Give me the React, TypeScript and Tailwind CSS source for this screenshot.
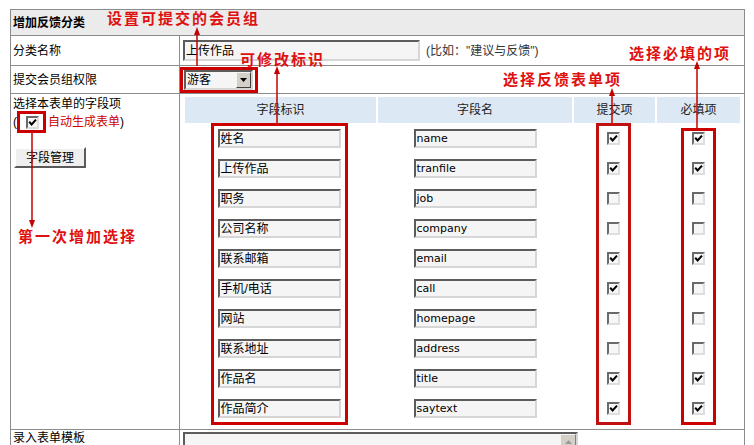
import React from "react";

const rows = [
  { label: "姓名", name: "name", submit: true, required: true },
  { label: "上传作品", name: "tranfile", submit: true, required: true },
  { label: "职务", name: "job", submit: false, required: false },
  { label: "公司名称", name: "company", submit: false, required: false },
  { label: "联系邮箱", name: "email", submit: true, required: true },
  { label: "手机/电话", name: "call", submit: true, required: false },
  { label: "网站", name: "homepage", submit: false, required: false },
  { label: "联系地址", name: "address", submit: false, required: false },
  { label: "作品名", name: "title", submit: true, required: true },
  { label: "作品简介", name: "saytext", submit: true, required: true },
];

function Check({ on }: { on: boolean }) {
  return (
    <span className="flex h-[13px] w-[13px] items-center justify-center border-2 border-t-[#6a6a6a] border-l-[#6a6a6a] border-b-[#dedede] border-r-[#dedede] bg-[#f7f7f7]">
      {on && (
        <svg width="9" height="9" viewBox="0 0 9 9">
          <path d="M1.2 3.8 L3.6 6.4 L8 1.6" stroke="#000" strokeWidth="2" fill="none" />
        </svg>
      )}
    </span>
  );
}

function Field({ value, wide }: { value: string; wide?: boolean }) {
  return (
    <div
      className={
        wide
          ? "flex h-[21px] w-[237px] items-center overflow-hidden whitespace-nowrap border-2 border-t-[#5c5c5c] border-l-[#5c5c5c] border-b-[#d6d6d6] border-r-[#d6d6d6] bg-[#f5f5f5] pl-[1px] pt-[1px] leading-none"
          : "flex h-[19px] w-[123px] items-center overflow-hidden whitespace-nowrap border-2 border-t-[#5c5c5c] border-l-[#5c5c5c] border-b-[#d6d6d6] border-r-[#d6d6d6] bg-[#f5f5f5] pl-[1px] pt-[1px] leading-none"
      }
    >
      {value}
    </div>
  );
}

function ArrowUp({ x, tip, end }: { x: number; tip: number; end: number }) {
  return (
    <g>
      <line x1={x} y1={tip + 4} x2={x} y2={end} stroke="#c40000" strokeWidth="1.5" />
      <polygon points={`${x},${tip} ${x - 3},${tip + 8} ${x + 3},${tip + 8}`} fill="#c40000" />
    </g>
  );
}

export default function App() {
  const note =
    "absolute whitespace-nowrap font-bold text-[15px] leading-[15px] tracking-[2px] text-[#e01010]";
  return (
    <div className="relative h-[445px] w-[754px] overflow-hidden bg-white font-['Liberation_Sans','Noto_Sans_CJK_SC',sans-serif] text-[12px] text-black">
      <div className="pl-[10px] pt-[9px]">
        <div className="w-[735px] border border-[#8c8c8c]">
          {/* header */}
          <div className="flex h-[26px] items-center border-b border-[#8c8c8c] bg-[#ebebeb] pl-[2px] font-bold leading-none">
            增加反馈分类
          </div>
          {/* row: name */}
          <div className="flex h-[30px] border-b border-[#8c8c8c]">
            <div className="flex w-[169px] items-center border-r border-[#8c8c8c] pl-[2px]">分类名称</div>
            <div className="flex items-center pl-[3px]">
              <Field value="上传作品" wide />
              <span className="ml-[6px] text-[#333]">(比如："建议与反馈")</span>
            </div>
          </div>
          {/* row: group */}
          <div className="flex h-[28px] border-b border-[#8c8c8c]">
            <div className="flex w-[169px] items-center border-r border-[#8c8c8c] pl-[2px]">提交会员组权限</div>
            <div className="flex items-center">
              <div className="flex h-[26px] w-[78px] items-center border-[3px] border-[#cc0000] pl-[1px]">
                <div className="flex h-[20px] w-[69px] items-center border-2 border-t-[#5c5c5c] border-l-[#5c5c5c] border-b-[#d6d6d6] border-r-[#d6d6d6] bg-[#f5f5f5]">
                  <span className="flex-1 pl-[1px] pt-[1px] leading-none">游客</span>
                  <span className="flex h-[16px] w-[15px] items-center justify-center border border-t-[#f4f4f4] border-l-[#f4f4f4] border-b-[#404040] border-r-[#404040] bg-[#d4d0c8]">
                    <svg width="7" height="4" viewBox="0 0 7 4">
                      <polygon points="0,0 7,0 3.5,4" fill="#000" />
                    </svg>
                  </span>
                </div>
              </div>
            </div>
          </div>
          {/* row: fields */}
          <div className="flex h-[336px] border-b border-[#8c8c8c]">
            <div className="flex w-[169px] flex-col border-r border-[#8c8c8c] pl-[2px] pt-[2px]">
              <div className="leading-[16px]">选择本表单的字段项</div>
              <div className="mt-[-1px] flex h-[22px] items-center leading-none">
                <span>(</span>
                <span className="flex h-[22px] w-[29px] items-center justify-center border-[3px] border-[#cc0000] pl-[2px]">
                  <Check on />
                </span>
                <span className="ml-[2px] text-[#cc0000]">自动生成表单</span>
                <span>)</span>
              </div>
              <button className="ml-[1px] mt-[14px] flex h-[21px] w-[72px] items-center justify-center border-2 border-t-[#ffffff] border-l-[#ffffff] border-b-[#5a5a5a] border-r-[#5a5a5a] bg-[#efefef] leading-none">
                字段管理
              </button>
            </div>
            <div className="pl-[5px] pt-[3px]">
              <div className="flex h-[26px] gap-[2px] text-[#222]">
                <div className="flex w-[191px] items-center justify-center bg-[#dce8f4]">字段标识</div>
                <div className="flex w-[194px] items-center justify-center bg-[#dce8f4]">字段名</div>
                <div className="flex w-[81px] items-center justify-center bg-[#dce8f4]">提交项</div>
                <div className="flex w-[83px] items-center justify-center bg-[#dce8f4]">必填项</div>
              </div>
              {rows.map((r) => (
                <div key={r.name} className="flex h-[30px] gap-[2px]">
                  <div className="flex w-[191px] items-center justify-center pr-[3px]">
                    <Field value={r.label} />
                  </div>
                  <div className="flex w-[194px] items-center justify-center font-['DejaVu_Sans','Noto_Sans_CJK_SC',sans-serif] text-[11px]">
                    <Field value={r.name} />
                  </div>
                  <div className="flex w-[81px] items-center justify-center pr-[2px]">
                    <Check on={r.submit} />
                  </div>
                  <div className="flex w-[83px] items-center justify-center">
                    <Check on={r.required} />
                  </div>
                </div>
              ))}
            </div>
          </div>
          {/* row: template */}
          <div className="flex h-[40px]">
            <div className="w-[169px] border-r border-[#8c8c8c] pl-[2px] pt-[1px] leading-[14px]">录入表单模板</div>
            <div className="pl-[3px] pt-[2px]">
              <div className="flex h-[60px] w-[395px] border-2 border-t-[#5c5c5c] border-l-[#5c5c5c] border-b-[#d6d6d6] border-r-[#d6d6d6] bg-[#f5f5f5]">
                <div className="flex-1" />
                <div className="w-[16px] bg-[#eeeeee]">
                  <div className="flex h-[16px] w-[16px] items-center justify-center border border-t-[#f4f4f4] border-l-[#f4f4f4] border-b-[#808080] border-r-[#808080] bg-[#d4d0c8]">
                    <svg width="7" height="4" viewBox="0 0 7 4">
                      <polygon points="3.5,0 7,4 0,4" fill="#9a9a9a" />
                    </svg>
                  </div>
                </div>
              </div>
            </div>
          </div>
        </div>
      </div>

      {/* annotation boxes */}
      <div className="absolute left-[211px] top-[123px] h-[302px] w-[137px] border-[3px] border-[#cc0000]" />
      <div className="absolute left-[596px] top-[123px] h-[302px] w-[35px] border-[3px] border-[#c01010]" />
      <div className="absolute left-[681px] top-[128px] h-[297px] w-[35px] border-[3px] border-[#cc0000]" />

      {/* annotation texts */}
      <div className={`${note} left-[107px] top-[11px]`}>设置可提交的会员组</div>
      <div className={`${note} left-[240px] top-[52px]`}>可修改标识</div>
      <div className={`${note} left-[629px] top-[46px]`}>选择必填的项</div>
      <div className={`${note} left-[503px] top-[72px]`}>选择反馈表单项</div>
      <div className={`${note} left-[18px] top-[229px]`}>第一次增加选择</div>

      {/* arrows */}
      <svg className="pointer-events-none absolute left-0 top-0" width="754" height="445">
        <ArrowUp x={197} tip={27} end={66} />
        <ArrowUp x={277} tip={66} end={123} />
        <ArrowUp x={612} tip={88} end={123} />
        <ArrowUp x={697} tip={61} end={128} />
        <line x1={32} y1={133} x2={32} y2={222} stroke="#c40000" strokeWidth="1.5" />
        <polygon points="32,228 29,220 35,220" fill="#c40000" />
      </svg>
    </div>
  );
}
